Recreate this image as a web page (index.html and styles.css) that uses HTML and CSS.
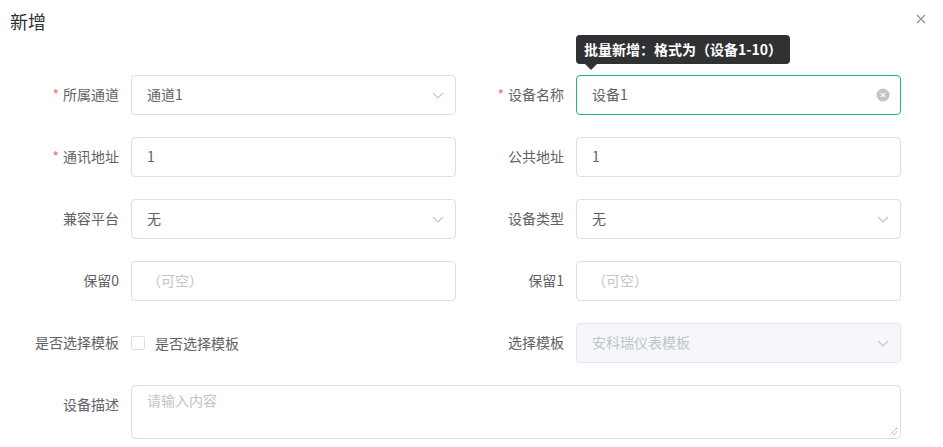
FILE: index.html
```html
<!DOCTYPE html>
<html lang="zh">
<head>
<meta charset="utf-8">
<link rel="stylesheet" href="styles.css">
</head>
<body>
<div class="dialog">
  <div class="header">
    <span class="title">新增</span>
    <span class="close">
      <svg width="10" height="10" viewBox="0 0 10 10"><path d="M1 1L9 9M9 1L1 9" stroke="#909399" stroke-width="1.2" fill="none"/></svg>
    </span>
  </div>
  <div class="form">
    <div class="item">
      <label class="label"><span class="req">*</span>所属通道</label>
      <div class="control">
        <div class="input select"><span class="val">通道1</span>
          <svg class="arrow" width="12" height="12" viewBox="0 0 12 12"><path d="M1 4l5 5 5-5" stroke="#c0c4cc" stroke-width="1.1" fill="none"/></svg>
        </div>
      </div>
    </div>
    <div class="item">
      <label class="label"><span class="req">*</span>设备名称</label>
      <div class="control">
        <div class="input focused"><span class="val">设备1</span>
          <svg class="clear" width="14" height="14" viewBox="0 0 14 14"><circle cx="7" cy="7" r="6.5" fill="#c0c4cc"/><path d="M4.8 4.8l4.4 4.4M9.2 4.8l-4.4 4.4" stroke="#fff" stroke-width="1.1"/></svg>
        </div>
        <div class="tooltip">批量新增：格式为（设备1-10）</div>
      </div>
    </div>
    <div class="item">
      <label class="label"><span class="req">*</span>通讯地址</label>
      <div class="control"><div class="input"><span class="val">1</span></div></div>
    </div>
    <div class="item">
      <label class="label">公共地址</label>
      <div class="control"><div class="input"><span class="val">1</span></div></div>
    </div>
    <div class="item">
      <label class="label">兼容平台</label>
      <div class="control">
        <div class="input select"><span class="val">无</span>
          <svg class="arrow" width="12" height="12" viewBox="0 0 12 12"><path d="M1 4l5 5 5-5" stroke="#c0c4cc" stroke-width="1.1" fill="none"/></svg>
        </div>
      </div>
    </div>
    <div class="item">
      <label class="label">设备类型</label>
      <div class="control">
        <div class="input select"><span class="val">无</span>
          <svg class="arrow" width="12" height="12" viewBox="0 0 12 12"><path d="M1 4l5 5 5-5" stroke="#c0c4cc" stroke-width="1.1" fill="none"/></svg>
        </div>
      </div>
    </div>
    <div class="item">
      <label class="label">保留0</label>
      <div class="control"><div class="input"><span class="ph">（可空）</span></div></div>
    </div>
    <div class="item">
      <label class="label">保留1</label>
      <div class="control"><div class="input"><span class="ph">（可空）</span></div></div>
    </div>
    <div class="item">
      <label class="label">是否选择模板</label>
      <div class="control check-row">
        <span class="checkbox"></span><span class="check-label">是否选择模板</span>
      </div>
    </div>
    <div class="item">
      <label class="label">选择模板</label>
      <div class="control">
        <div class="input select disabled"><span class="val">安科瑞仪表模板</span>
          <svg class="arrow" width="12" height="12" viewBox="0 0 12 12"><path d="M1 4l5 5 5-5" stroke="#c0c4cc" stroke-width="1.1" fill="none"/></svg>
        </div>
      </div>
    </div>
    <div class="item wide">
      <label class="label">设备描述</label>
      <div class="control">
        <div class="textarea"><span class="ph">请输入内容</span>
          <svg class="grip" width="9" height="9" viewBox="0 0 9 9"><path d="M8 1L1 8M8 4.5L4.5 8" stroke="#777" stroke-width="1" stroke-dasharray="1 1" fill="none"/></svg>
        </div>
      </div>
    </div>
  </div>
</div>
</body>
</html>
```

FILE: styles.css
```css
* { box-sizing: border-box; }
html, body { margin: 0; padding: 0; background: #fff; }
body {
  font-family: "Noto Sans CJK SC", "Noto Sans", sans-serif;
  font-size: 14px;
  color: #606266;
}
.dialog { width: 943px; height: 447px; overflow: hidden; }
.header {
  display: flex;
  justify-content: space-between;
  align-items: flex-start;
  padding: 9px 17px 0 10px;
  height: 75px;
}
.title { font-size: 18px; line-height: 24px; color: #303133; }
.close { margin-top: 5px; display: flex; }
.form {
  display: grid;
  grid-template-columns: 445px 445px;
  row-gap: 22px;
  margin-left: 11px;
}
.item { display: flex; align-items: flex-start; }
.item.wide { grid-column: 1 / 3; }
.label {
  width: 120px;
  flex: none;
  text-align: right;
  padding-right: 12px;
  line-height: 39px;
  color: #606266;
  white-space: nowrap;
}
.req { color: #f56c6c; margin-right: 4px; }
.control { position: relative; flex: 1; }
.input {
  height: 40px;
  border: 1px solid #dcdfe6;
  border-radius: 4px;
  padding: 0 15px 1px;
  display: flex;
  align-items: center;
  justify-content: space-between;
  line-height: 37px;
  background: #fff;
}
.input.focused { border-color: #1ab394; }
.input.disabled { background: #f5f7fa; border-color: #e4e7ed; color: #c0c4cc; }
.val { color: inherit; }
.ph { color: #c0c4cc; }
.arrow { margin-right: -4px; }
.clear { margin-right: -5px; }
.check-row { display: flex; align-items: center; height: 40px; }
.checkbox {
  width: 14px; height: 14px;
  border: 1px solid #dcdfe6;
  border-radius: 2px;
  background: #fff;
}
.check-label { margin-left: 10px; }
.textarea {
  position: relative;
  height: 54px;
  border: 1px solid #dcdfe6;
  border-radius: 4px;
  padding: 4px 15px;
  line-height: 21px;
}
.grip { position: absolute; right: 2px; bottom: 2px; }
.tooltip {
  position: absolute;
  left: 0;
  top: -40px;
  background: #303133;
  color: #fff;
  font-weight: bold;
  font-size: 14px;
  line-height: 17px;
  padding: 6px 8px;
  border-radius: 4px;
  white-space: nowrap;
}
.tooltip::after {
  content: "";
  position: absolute;
  left: 9px;
  bottom: -6px;
  border-left: 6px solid transparent;
  border-right: 6px solid transparent;
  border-top: 6px solid #303133;
}
```
